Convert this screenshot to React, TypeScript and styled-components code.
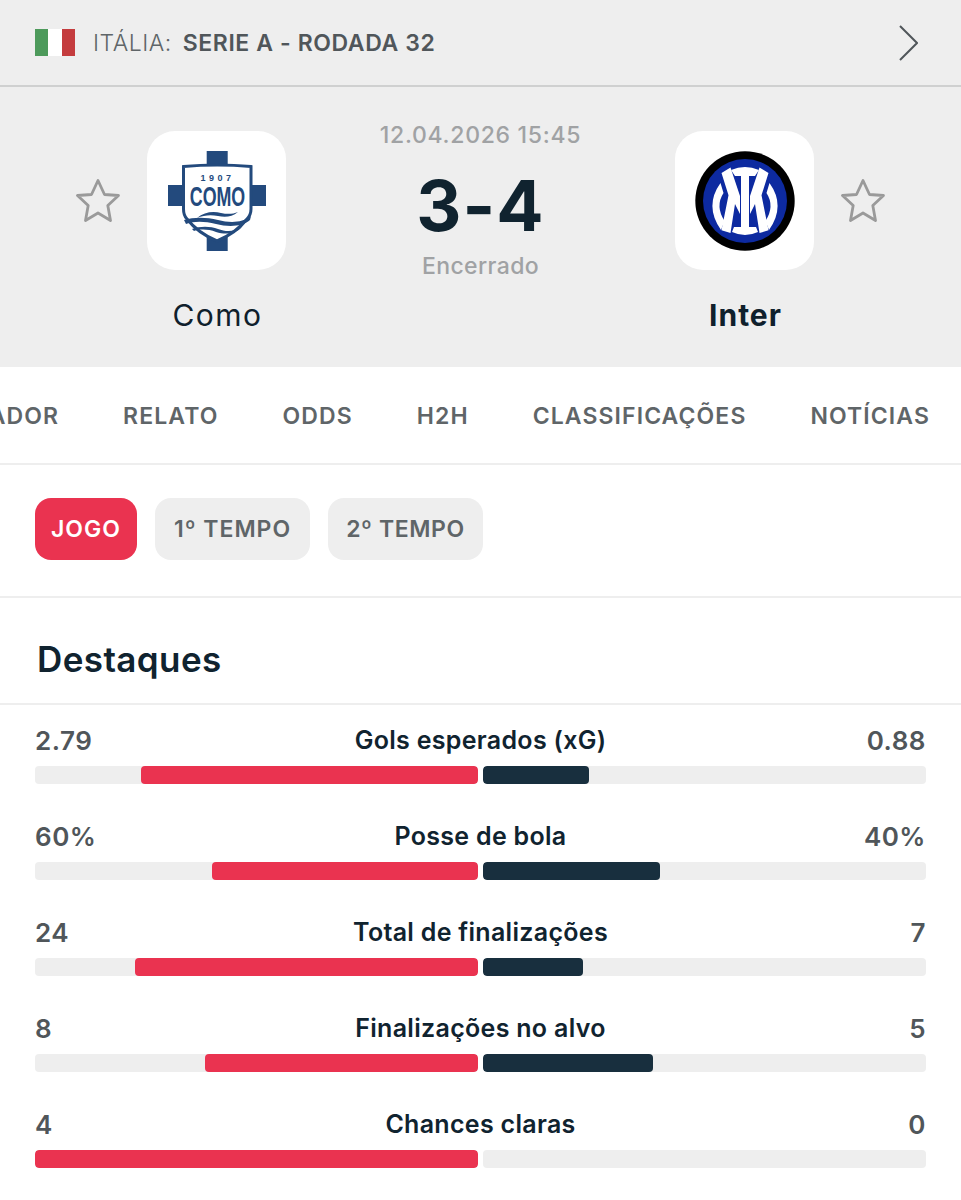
import React from 'react';
import styled, { createGlobalStyle } from 'styled-components';

const GlobalStyle = createGlobalStyle`
  html, body {
    margin: 0;
    padding: 0;
    background: #ffffff;
    font-family: Inter, "Noto Sans", "Liberation Sans", sans-serif;
  }
`;

const Page = styled.div`
  width: 961px;
  height: 1200px;
  overflow: hidden;
  background: #ffffff;
`;

const LeagueBar = styled.div`
  height: 85px;
  display: flex;
  align-items: center;
  padding: 0 43px 0 35px;
  background: #eeeeee;
  border-bottom: 2px solid #cfd0d0;
`;

const Flag = styled.div`
  width: 40px;
  height: 27px;
  display: flex;
  margin-right: 18px;
`;

const FlagStripe = styled.div<{ $color: string }>`
  flex: 1;
  background: ${(props) => props.$color};
`;

const Country = styled.span`
  font-size: 23px;
  font-weight: 300;
  letter-spacing: 0.5px;
  color: #5f6568;
  margin-right: 11px;
`;

const League = styled.span`
  font-size: 23px;
  font-weight: 600;
  letter-spacing: 0.6px;
  color: #50565a;
`;

const Chevron = styled.svg`
  margin-left: auto;
`;

const MatchHeader = styled.div`
  height: 280px;
  box-sizing: border-box;
  display: grid;
  grid-template-columns: 1fr 190px 1fr;
  background: #eeeeee;
`;

const TeamSide = styled.div<{ $reverse?: boolean }>`
  display: flex;
  flex-direction: ${(props) => (props.$reverse ? 'row-reverse' : 'row')};
  align-items: flex-start;
  padding: 44px 76px 0;
  gap: 27px;
`;

const StarIcon = styled.svg`
  margin-top: 48px;
  flex-shrink: 0;
`;

const TeamColumn = styled.div`
  display: flex;
  flex-direction: column;
  align-items: center;
  gap: 26px;
`;

const LogoBox = styled.div`
  width: 139px;
  height: 139px;
  display: flex;
  align-items: center;
  justify-content: center;
  background: #ffffff;
  border-radius: 28px;
`;

const TeamName = styled.div<{ $winner?: boolean }>`
  padding-left: 2px;
  font-size: 30px;
  line-height: 38px;
  letter-spacing: ${(props) => (props.$winner ? 1 : 1.5)}px;
  font-weight: ${(props) => (props.$winner ? 700 : 400)};
  color: #0f202c;
`;

const ScoreColumn = styled.div`
  display: flex;
  flex-direction: column;
  align-items: center;
  padding-top: 34px;
`;

const DateText = styled.div`
  font-size: 23px;
  line-height: 28px;
  font-weight: 500;
  letter-spacing: 0.7px;
  color: #a0a2a4;
  white-space: nowrap;
`;

const Score = styled.div`
  margin-top: 15px;
  font-size: 70px;
  line-height: 84px;
  font-weight: 700;
  letter-spacing: 1px;
  color: #10232f;
`;

const StatusText = styled.div`
  margin-top: 4px;
  font-size: 23px;
  line-height: 28px;
  font-weight: 500;
  letter-spacing: 0.4px;
  color: #a0a2a4;
`;

const TabsRow = styled.div`
  height: 98px;
  box-sizing: border-box;
  display: flex;
  justify-content: flex-end;
  align-items: center;
  gap: 64px;
  padding: 2px 31px 0 0;
  overflow: hidden;
  border-bottom: 2px solid #eeeeee;
`;

const Tab = styled.span`
  flex-shrink: 0;
  font-size: 23px;
  font-weight: 600;
  letter-spacing: 1.1px;
  color: #5f6568;
`;

const PillsRow = styled.div`
  height: 133px;
  box-sizing: border-box;
  display: flex;
  align-items: flex-start;
  gap: 18px;
  padding: 33px 35px 0;
  border-bottom: 2px solid #eeeeee;
`;

const Pill = styled.div<{ $active?: boolean; $tight?: boolean }>`
  height: 62px;
  display: flex;
  align-items: center;
  padding: 0 ${(props) => (props.$active ? 16 : props.$tight ? 18 : 19)}px;
  border-radius: 16px;
  font-size: 23px;
  font-weight: 600;
  letter-spacing: ${(props) => (props.$tight ? 0.6 : 1)}px;
  background: ${(props) => (props.$active ? '#ea3350' : '#eeeeee')};
  color: ${(props) => (props.$active ? '#ffffff' : '#5f6568')};
`;

const SectionTitle = styled.div`
  height: 107px;
  box-sizing: border-box;
  padding: 38px 37px 0;
  font-size: 35px;
  line-height: 46px;
  font-weight: 600;
  letter-spacing: 0.4px;
  color: #10232f;
  border-bottom: 2px solid #eeeeee;
`;

const StatList = styled.div`
  display: flex;
  flex-direction: column;
  gap: 33px;
  padding: 16px 35px 0;
`;

const StatRow = styled.div`
  display: flex;
  flex-direction: column;
  gap: 7px;
`;

const StatLabels = styled.div`
  height: 38px;
  display: grid;
  grid-template-columns: 1fr auto 1fr;
  align-items: center;
`;

const StatValue = styled.span<{ $away?: boolean }>`
  font-size: 26px;
  font-weight: 600;
  letter-spacing: 0.5px;
  color: #50565a;
  text-align: ${(props) => (props.$away ? 'right' : 'left')};
`;

const StatName = styled.span`
  font-size: 25px;
  font-weight: 600;
  letter-spacing: 0.3px;
  color: #10232f;
`;

const BarRow = styled.div`
  display: grid;
  grid-template-columns: 1fr 1fr;
  gap: 5px;
`;

const BarTrack = styled.div<{ $home?: boolean }>`
  height: 18px;
  display: flex;
  justify-content: ${(props) => (props.$home ? 'flex-end' : 'flex-start')};
  background: #eeeeee;
  border-radius: 4px;
  overflow: hidden;
`;

const BarFill = styled.div<{ $home?: boolean }>`
  height: 100%;
  border-radius: 4px;
  background: ${(props) => (props.$home ? '#ea3350' : '#182f3e')};
`;

const tabs = ['JOGADOR', 'RELATO', 'ODDS', 'H2H', 'CLASSIFICAÇÕES', 'NOTÍCIAS'];

const stats = [
  { name: 'Gols esperados (xG)', home: '2.79', away: '0.88', homePct: 76, awayPct: 24 },
  { name: 'Posse de bola', home: '60%', away: '40%', homePct: 60, awayPct: 40 },
  { name: 'Total de finalizações', home: '24', away: '7', homePct: 77.4, awayPct: 22.6 },
  { name: 'Finalizações no alvo', home: '8', away: '5', homePct: 61.6, awayPct: 38.4 },
  { name: 'Chances claras', home: '4', away: '0', homePct: 100, awayPct: 0 },
];

const Star = () => (
  <StarIcon width="44" height="44" viewBox="0 0 44 44" fill="none">
    <path
      d="M22 1.5L28.500 15.500 42.500 16.500 31.800 26.500 34.500 41.500 22 34 9.500 41.500 12.200 26.500 1.500 16.500 15.500 15.500z"
      stroke="#9a9a9a"
      strokeWidth="2.800"
      strokeLinejoin="round"
    />
  </StarIcon>
);

const ComoLogo = () => (
  <svg width="98" height="100" viewBox="0 0 98 100">
    <path d="M38.700 0h21v20h-21zM0 34h20v21H0zM78 34h20v21H78zM38.700 80h21v20h-21z" fill="#234a7d" />
    <path
      d="M15.500 15.500Q49 12.500 83 15.500V58c0 4-1 7-4 10-7 9-18 17-30 22-12-5-23-13-30-22-3-3-3.500-6-3.500-10z"
      fill="#ffffff"
      stroke="#234a7d"
      strokeWidth="3"
    />
    <text
      x="49.500"
      y="29.500"
      textAnchor="middle"
      fontFamily="'Liberation Sans', sans-serif"
      fontWeight="700"
      fontSize="9"
      letterSpacing="3.500"
      fill="#234a7d"
    >
      1907
    </text>
    <text
      transform="translate(49.500 55) scale(.66 1)"
      textAnchor="middle"
      fontFamily="'Liberation Sans', sans-serif"
      fontWeight="700"
      fontSize="27"
      fill="#234a7d"
    >
      COMO
    </text>
    <path d="M29 67C36 61 45 60 53 62c7 1.500 12 1 17-1-6 5-13 5.500-20 4-7-1.500-14-1-21 2z" fill="#234a7d" />
    <path d="M16 69c10-3 22-3 34 0s24 3 33-4l-1 4c-8 7-22 7-34 4s-22-3-30 0z" fill="#234a7d" />
    <path d="M24 78c8-3 18-3 26 0s16 3 24-2c-6 7-16 8-26 5-8-3-16-3-22-1z" fill="#234a7d" />
  </svg>
);

const InterHalf = () => (
  <>
    <path d="M26.500 79.300L35.500 82 40 53 45 63V45L35.500 16.500 26.500 22 33.500 44.300z" />
    <path d="M25.500 32Q9 55 26 79L29.500 70Q20 55 28.500 42z" />
  </>
);

const InterLogo = () => (
  <svg width="100" height="100" viewBox="0 0 100 100">
    <circle cx="50" cy="50" r="49.700" fill="#000000" />
    <circle cx="50" cy="50" r="42" fill="#0d2aa0" />
    <g fill="#ffffff">
      <path d="M36 19Q50 13 64 19L60 25H54V76H61L63 81Q50 87 37 81L39 76H46V25H40z" />
      <InterHalf />
      <g transform="translate(100 0) scale(-1 1)">
        <InterHalf />
      </g>
    </g>
  </svg>
);

export default function App() {
  return (
    <Page>
      <GlobalStyle />
      <LeagueBar>
        <Flag>
          <FlagStripe $color="#4d9a5b" />
          <FlagStripe $color="#ffffff" />
          <FlagStripe $color="#c43c3e" />
        </Flag>
        <Country>ITÁLIA:</Country>
        <League>SERIE A - RODADA 32</League>
        <Chevron width="20" height="36" viewBox="0 0 20 36" fill="none">
          <path d="M2 1l17 17L2 35" stroke="#50565a" strokeWidth="2" />
        </Chevron>
      </LeagueBar>
      <MatchHeader>
        <TeamSide>
          <Star />
          <TeamColumn>
            <LogoBox>
              <ComoLogo />
            </LogoBox>
            <TeamName>Como</TeamName>
          </TeamColumn>
        </TeamSide>
        <ScoreColumn>
          <DateText>12.04.2026 15:45</DateText>
          <Score>3-4</Score>
          <StatusText>Encerrado</StatusText>
        </ScoreColumn>
        <TeamSide $reverse>
          <Star />
          <TeamColumn>
            <LogoBox>
              <InterLogo />
            </LogoBox>
            <TeamName $winner>Inter</TeamName>
          </TeamColumn>
        </TeamSide>
      </MatchHeader>
      <TabsRow>
        {tabs.map((tab) => (
          <Tab key={tab}>{tab}</Tab>
        ))}
      </TabsRow>
      <PillsRow>
        <Pill $active>JOGO</Pill>
        <Pill>1º TEMPO</Pill>
        <Pill $tight>2º TEMPO</Pill>
      </PillsRow>
      <SectionTitle>Destaques</SectionTitle>
      <StatList>
        {stats.map((stat) => (
          <StatRow key={stat.name}>
            <StatLabels>
              <StatValue>{stat.home}</StatValue>
              <StatName>{stat.name}</StatName>
              <StatValue $away>{stat.away}</StatValue>
            </StatLabels>
            <BarRow>
              <BarTrack $home>
                <BarFill $home style={{ width: `${stat.homePct}%` }} />
              </BarTrack>
              <BarTrack>
                <BarFill style={{ width: `${stat.awayPct}%` }} />
              </BarTrack>
            </BarRow>
          </StatRow>
        ))}
      </StatList>
    </Page>
  );
}
